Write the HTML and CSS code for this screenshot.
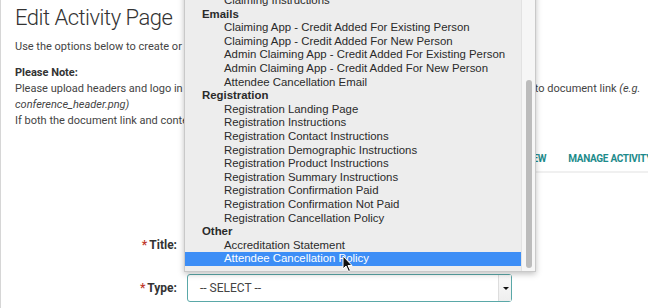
FILE: index.html
```html
<!DOCTYPE html>
<html>
<head>
  <title>Edit Activity Page</title>
  <meta name="viewport" content="width=device-width, initial-scale=1.0">
  <link rel="stylesheet" href="styles.css">
</head>
<body>

  <div class="page">
    <h1 class="judul">Edit Activity Page</h1>
    <p class="intro">Use the options below to create or edit the content shown on this activity page.</p>
    <p class="note">
      <b>Please Note:</b><br>
      Please upload headers and logo in the file library first, then copy the URL path of the image file and paste it to document link <i>(e.g.<br>
      conference_header.png)</i><br>
      If both the document link and content are filled in, the document link will be used.
    </p>

    <nav class="tabs">
      <a href="#">Preview</a>
      <a href="#">Manage Activity</a>
    </nav>

    <form class="form">
      <div class="baris">
        <label><span class="wajib">*</span>Title:</label>
        <input type="text" class="isian">
      </div>
      <div class="baris">
        <label><span class="wajib">*</span>Type:</label>
        <div class="pilih">
          <span>-- SELECT --</span>
          <span class="panah"></span>
        </div>
      </div>
    </form>
  </div>

  <div class="menu">
    <div class="daftar">
      <div class="item">Claiming Instructions</div>
      <div class="grup">Emails</div>
      <div class="item">Claiming App - Credit Added For Existing Person</div>
      <div class="item">Claiming App - Credit Added For New Person</div>
      <div class="item">Admin Claiming App - Credit Added For Existing Person</div>
      <div class="item">Admin Claiming App - Credit Added For New Person</div>
      <div class="item">Attendee Cancellation Email</div>
      <div class="grup">Registration</div>
      <div class="item">Registration Landing Page</div>
      <div class="item">Registration Instructions</div>
      <div class="item">Registration Contact Instructions</div>
      <div class="item">Registration Demographic Instructions</div>
      <div class="item">Registration Product Instructions</div>
      <div class="item">Registration Summary Instructions</div>
      <div class="item">Registration Confirmation Paid</div>
      <div class="item">Registration Confirmation Not Paid</div>
      <div class="item">Registration Cancellation Policy</div>
      <div class="grup">Other</div>
      <div class="item">Accreditation Statement</div>
      <div class="item aktif">Attendee Cancellation Policy</div>
    </div>
    <div class="gulir"><div class="jempol"></div></div>
  </div>

  <svg class="kursor" width="12" height="18" viewBox="0 0 12 18">
    <path d="M1 1 L1 14 L4 11 L6.5 16.5 L8.5 15.5 L6 10.5 L10 10.5 Z" fill="#111" stroke="#fff" stroke-width="1"/>
  </svg>

</body>
</html>
```

FILE: styles.css
```css
body {
  margin: 0;
  background-color: #fff;
  font-family: Roboto, "Liberation Sans", sans-serif;
  color: #444;
  overflow: hidden;
}

.page {
  padding: 4px 0 0 14px;
  border-left: 1px solid #d6d6d6;
  height: 308px;
  box-sizing: border-box;
}

.judul {
  font-size: 22px;
  font-weight: 300;
  letter-spacing: -0.5px;
  color: #333;
  margin: 0;
  line-height: 28px;
  white-space: nowrap;
}

.intro {
  font-size: 11px;
  margin: 7px 0 0 0;
  line-height: 16px;
  white-space: nowrap;
}

.note {
  font-size: 11px;
  margin: 10px 0 0 0;
  line-height: 16px;
  white-space: nowrap;
}

.note b {
  color: #333;
}

.tabs {
  display: flex;
  gap: 22px;
  margin: 24px 0 0 491px;
  padding-bottom: 7px;
  border-bottom: 2px solid #f0f0f0;
}

.tabs a {
  color: #1d8b8b;
  font-size: 10px;
  letter-spacing: -0.3px;
  font-weight: bold;
  text-transform: uppercase;
  text-decoration: none;
  white-space: nowrap;
}

.form {
  margin-top: 58px;
}

.baris {
  display: flex;
  align-items: center;
  gap: 10px;
  margin-bottom: 15px;
}

.baris label {
  width: 162px;
  text-align: right;
  font-size: 12px;
  font-weight: bold;
  color: #333;
}

.wajib {
  color: #c0392b;
  margin-right: 2px;
}

.isian {
  width: 324px;
  height: 28px;
  box-sizing: border-box;
  border: 1px solid #ccc;
  border-radius: 3px;
}

.pilih {
  width: 325px;
  height: 28px;
  box-sizing: border-box;
  border: 1px solid #5aa8a8;
  border-radius: 3px;
  display: flex;
  align-items: center;
  justify-content: space-between;
  padding-left: 12px;
  font-size: 12px;
  color: #444;
}

.panah {
  width: 12px;
  height: 26px;
  border-left: 1px solid #ddd;
  background: linear-gradient(#fafafa, #eee);
  position: relative;
}

.panah::after {
  content: "";
  position: absolute;
  left: 4px;
  top: 12px;
  border-left: 3px solid transparent;
  border-right: 3px solid transparent;
  border-top: 3px solid #111;
}

.menu {
  position: absolute;
  left: 184px;
  top: -9px;
  width: 350px;
  height: 279px;
  background-color: #ededed;
  border: 1px solid #c9c9c9;
  box-shadow: 0 2px 6px rgba(0, 0, 0, 0.25);
  display: flex;
  font-family: "Liberation Sans", Arial, sans-serif;
  font-size: 11.4px;
  color: #2a2a2a;
}

.daftar {
  flex: 1;
  padding-top: 2px;
}

.grup {
  height: 13.6px;
  line-height: 13.6px;
  font-weight: bold;
  padding-left: 17px;
}

.item {
  height: 13.6px;
  line-height: 13.6px;
  padding-left: 39px;
}

.item.aktif {
  background-color: #3d8ef6;
  color: #fff;
}

.gulir {
  width: 13px;
  background-color: #f6f6f6;
  border-left: 1px solid #e2e2e2;
  padding-top: 88px;
}

.jempol {
  width: 6px;
  margin: 0 auto;
  height: 188px;
  border-radius: 3px;
  background-color: #bcbcbc;
}

.kursor {
  position: absolute;
  left: 342px;
  top: 255px;
}
```
